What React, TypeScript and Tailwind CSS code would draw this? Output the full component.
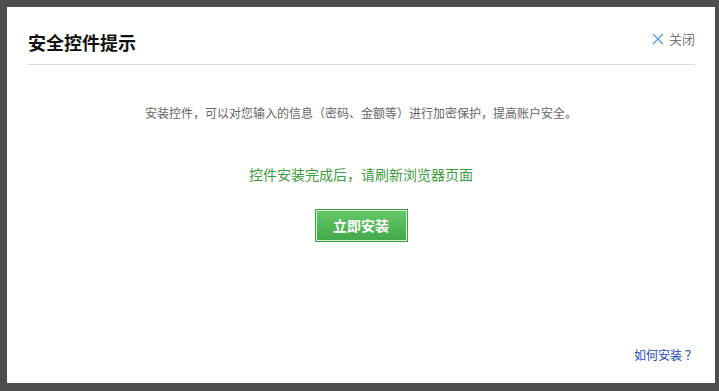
export default function App() {
  return (
    <div
      className="flex h-[391px] w-[719px] bg-[#4e4e4e] pb-[8px] pl-[7px] pr-[4px] pt-[7px]"
      style={{ fontFamily: '"Noto Sans CJK SC", "Liberation Sans", sans-serif' }}
    >
      <div className="flex flex-1 flex-col bg-white">
        <div className="ml-[21px] mr-[20px] flex items-start justify-between border-b border-[#dcdcdc] pb-[10px] pt-[23px]">
          <h1 className="text-[18px] font-bold leading-[24px] text-[#111]">安全控件提示</h1>
          <button type="button" className="mt-[-1px] flex items-center gap-[4px] text-[13px] leading-[20px] text-[#777]">
            <svg width="12" height="12" viewBox="0 0 12 12" className="mr-[1px]">
              <path d="M1 1L11 11M11 1L1 11" stroke="#5a9be0" strokeWidth="1.3" fill="none" />
            </svg>
            关闭
          </button>
        </div>

        <p className="mt-[38px] text-center text-[12px] leading-[20px] text-[#666]">
          安装控件，可以对您输入的信息（密码、金额等）进行加密保护，提高账户安全。
        </p>
        <p className="mt-[41px] text-center text-[14px] leading-[20px] text-[#3c9b3e]">
          控件安装完成后，请刷新浏览器页面
        </p>
        <div className="mt-[25px] flex justify-center">
          <button type="button" className="h-[33px] w-[93px] border border-[#3c9e46] bg-white">
            <span className="flex h-full w-full items-center justify-center border border-[#d6f0d6] bg-gradient-to-b from-[#64c866] to-[#41a84c] text-[14px] font-bold text-white">
              立即安装
            </span>
          </button>
        </div>

        <div className="mt-auto flex justify-end pb-[18px] pr-[18px]">
          <a href="#" className="text-[12px] leading-[20px] text-[#2348b4]">
            如何安装<span className="ml-[3px]">？</span>
          </a>
        </div>
      </div>
    </div>
  );
}
